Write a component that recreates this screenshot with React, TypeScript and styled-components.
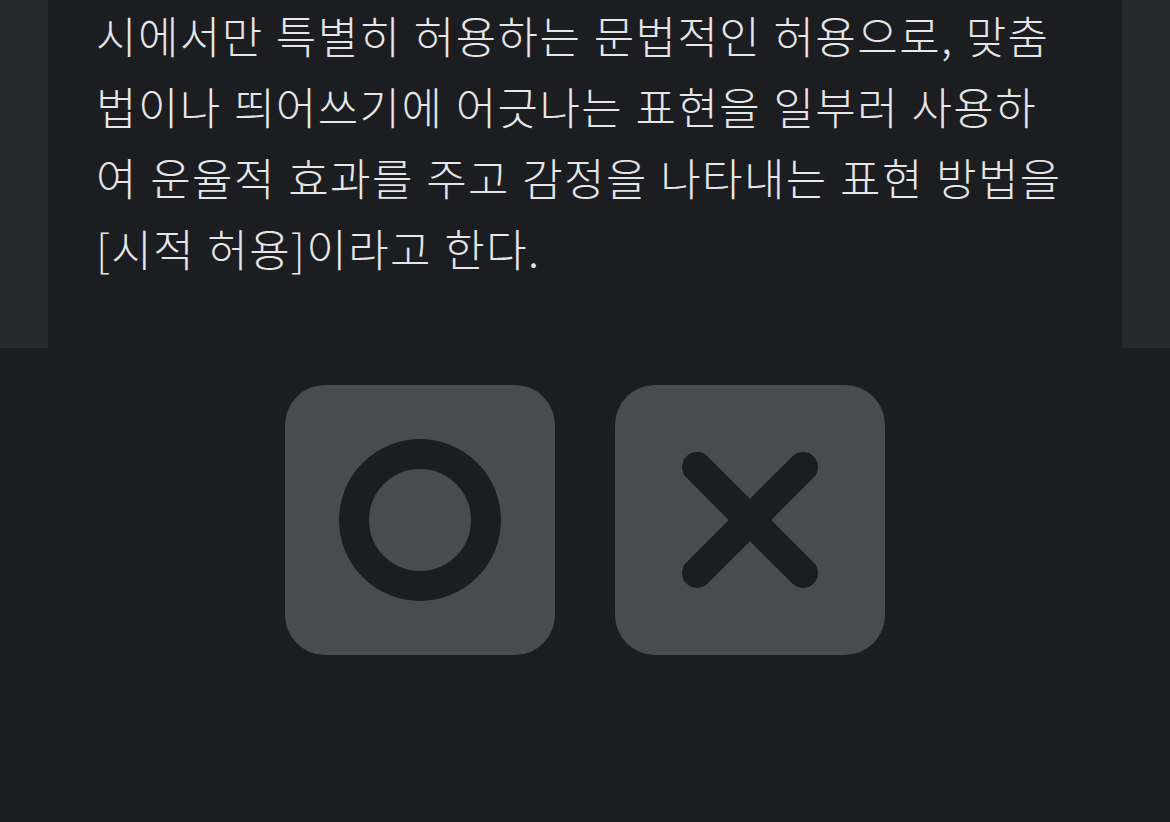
import React from "react";
import styled, { createGlobalStyle } from "styled-components";

const GlobalStyle = createGlobalStyle`
    html, body {
        margin: 0;
        padding: 0;
        background: #1c1d21;
    }
    * {
        box-sizing: border-box;
    }
`

const Page = styled.div`
    width: 100%;
    min-height: 822px;
    background: #1c1d21;
    font-family: "Noto Sans CJK KR", "Noto Sans", sans-serif;
    overflow: hidden;
`
const TopBand = styled.div`
    background: #27282c;
    padding: 0 48px;
`
const Card = styled.div`
    background: #1c1d21;
    height: 348px;
    padding: 0 48px;
`
const Passage = styled.p`
    margin: 0;
    color: #e6e6e8;
    font-size: 44px;
    font-weight: 300;
    letter-spacing: 1.4px;
    word-spacing: 1.2px;
    line-height: 71px;
    white-space: nowrap;
`
const AnswerRow = styled.div`
    display: flex;
    justify-content: center;
    gap: 60px;
    margin-top: 37px;
`
const AnswerButton = styled.button`
    width: 270px;
    height: 270px;
    border: none;
    border-radius: 40px;
    background: #484b50;
    display: flex;
    align-items: center;
    justify-content: center;
    padding: 0;
    cursor: pointer;
`

const CircleMark = () => (
    <svg width="170" height="170" viewBox="0 0 170 170">
        <circle cx="85" cy="85" r="66" fill="none" stroke="#1c1d21" strokeWidth="30" />
    </svg>
)

const CrossMark = () => (
    <svg width="170" height="170" viewBox="0 0 170 170">
        <path d="M32 32 L138 138 M138 32 L32 138" stroke="#1c1d21" strokeWidth="30" strokeLinecap="round" />
    </svg>
)

const App = () => {
    return (
        <Page>
            <GlobalStyle />
            <TopBand>
                <Card>
                    <Passage>
                        시에서만 특별히 허용하는 문법적인 허용으로, 맞춤<br />
                        법이나 띄어쓰기에 어긋나는 표현을 일부러 사용하<br />
                        여 운율적 효과를 주고 감정을 나타내는 표현 방법을<br />
                        [시적 허용]이라고 한다.
                    </Passage>
                </Card>
            </TopBand>
            <AnswerRow>
                <AnswerButton aria-label="O">
                    <CircleMark />
                </AnswerButton>
                <AnswerButton aria-label="X">
                    <CrossMark />
                </AnswerButton>
            </AnswerRow>
        </Page>
    )
}

export default App;
